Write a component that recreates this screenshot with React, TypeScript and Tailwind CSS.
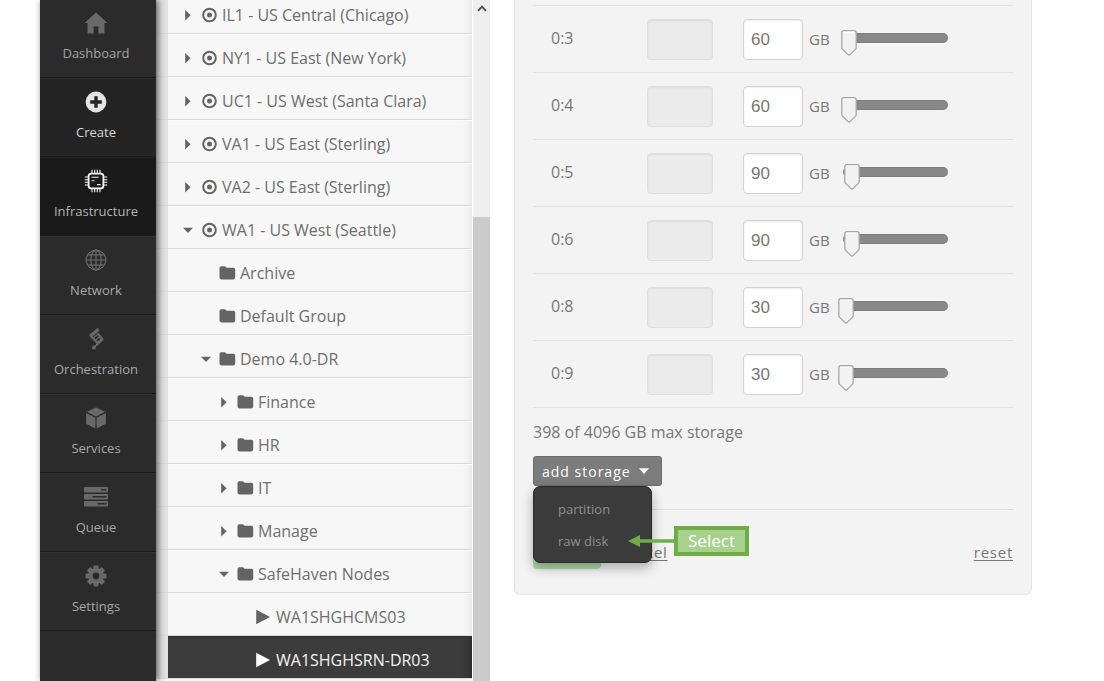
import { useState, type ReactNode } from "react";

type NavItem = { label: string; icon: ReactNode; tone: string; text: string };

const HomeIcon = () => (
  <svg width="24" height="22" viewBox="0 0 24 22" fill="currentColor" aria-hidden="true">
    <path d="M12 0.5 L23.5 11 H20.5 V21.5 H14.4 V14.5 H9.6 V21.5 H3.5 V11 H0.5 Z" />
  </svg>
);

const PlusIcon = () => (
  <svg width="22" height="22" viewBox="0 0 22 22" aria-hidden="true">
    <circle cx="11" cy="11" r="10.4" fill="currentColor" />
    <path d="M11 5.2V16.8M5.2 11H16.8" stroke="#242424" strokeWidth="3.4" />
  </svg>
);

const ChipIcon = () => (
  <svg width="24" height="24" viewBox="0 0 24 24" fill="none" stroke="currentColor" aria-hidden="true">
    <rect x="4.6" y="4.6" width="14.8" height="14.8" rx="2.6" strokeWidth="1.8" />
    <path
      strokeWidth="1.1"
      d="M8 .8V4M10.7 .8V4M13.3 .8V4M16 .8V4M8 20V23.2M10.7 20V23.2M13.3 20V23.2M16 20V23.2M.8 8H4M.8 10.7H4M.8 13.3H4M.8 16H4M20 8H23.2M20 10.7H23.2M20 13.3H23.2M20 16H23.2"
    />
    <path strokeWidth="1.1" d="M7.6 8.3H14.6M7.6 11.8H10.4M13 15.6H16.6" />
  </svg>
);

const GlobeIcon = () => (
  <svg width="22" height="22" viewBox="0 0 22 22" fill="none" stroke="currentColor" strokeWidth="1.2" aria-hidden="true">
    <circle cx="11" cy="11" r="9.8" />
    <ellipse cx="11" cy="11" rx="5.2" ry="9.8" />
    <path d="M11 1.2V20.8M1.2 11H20.8M2.8 5.8H19.2M2.8 16.2H19.2" />
  </svg>
);

const FlowIcon = () => (
  <svg width="16" height="22" viewBox="0 0 16 22" fill="none" stroke="currentColor" strokeLinecap="round" strokeLinejoin="round" aria-hidden="true">
    <path d="M9.6 2L3.2 7.4" strokeWidth="3.4" />
    <path d="M2.8 8L9 14.4" strokeWidth="2.2" />
    <path d="M10 6L14.4 11.2L9 16.8" strokeWidth="2.2" />
    <path d="M5.8 9.4L9.8 6.2M7.6 12L11.8 8.8M9.6 14.2L13.4 11.2" strokeWidth="1.3" />
    <circle cx="6" cy="19.4" r="2" fill="currentColor" stroke="none" />
    <path d="M6 19.4L9 16.8" strokeWidth="1.4" />
  </svg>
);

const CubeIcon = () => (
  <svg width="20" height="22" viewBox="0 0 20 22" fill="currentColor" aria-hidden="true">
    <path d="M10 .4L19.2 4.8L10 9.6L.8 4.8Z" />
    <path d="M.1 6L9.4 10.8V21.6L.1 16.8Z" />
    <path d="M19.9 6L10.6 10.8V21.6L19.9 16.8Z" />
  </svg>
);

const QueueIcon = () => (
  <svg width="24" height="20" viewBox="0 0 24 20" aria-hidden="true">
    <g fill="currentColor">
      <rect width="24" height="5.6" rx=".8" />
      <rect y="7" width="24" height="5.6" rx=".8" />
      <rect y="14" width="24" height="5.6" rx=".8" />
    </g>
    <path d="M17 2.8H22.4M8.4 9.8H22.4M13.6 16.8H22.4" stroke="#2b2b2b" strokeWidth="1.6" />
  </svg>
);

const GearIcon = () => (
  <svg width="22" height="22" viewBox="-11 -11 22 22" aria-hidden="true">
    <g fill="currentColor">
      {[0, 45, 90, 135].map((a) => (
        <rect key={a} x="-2.6" y="-10.5" width="5.2" height="21" rx="1.4" transform={`rotate(${a})`} />
      ))}
      <circle r="7.8" />
    </g>
    <circle r="3.4" fill="#2b2b2b" />
  </svg>
);

const idle = "bg-[#2b2b2b] text-[#696969]";
const nav: NavItem[] = [
  { label: "Dashboard", icon: <HomeIcon />, tone: idle, text: "text-[#a3a3a3]" },
  { label: "Create", icon: <PlusIcon />, tone: "bg-[#242424] text-[#e4e4e4]", text: "text-[#d6d6d6]" },
  { label: "Infrastructure", icon: <ChipIcon />, tone: "bg-[#1a1a1a] text-[#f5f5f5]", text: "text-[#b4b4b4]" },
  { label: "Network", icon: <GlobeIcon />, tone: idle, text: "text-[#a8a8a8]" },
  { label: "Orchestration", icon: <FlowIcon />, tone: idle, text: "text-[#a8a8a8]" },
  { label: "Services", icon: <CubeIcon />, tone: idle, text: "text-[#a8a8a8]" },
  { label: "Queue", icon: <QueueIcon />, tone: idle, text: "text-[#a8a8a8]" },
  { label: "Settings", icon: <GearIcon />, tone: idle, text: "text-[#a8a8a8]" },
];

type Kind = "site" | "folder" | "server";
type Node = { label: string; kind: Kind; level: 0 | 1 | 2 | 3; caret?: "open" | "closed"; active?: boolean };

const tree: Node[] = [
  { label: "IL1 - US Central (Chicago)", kind: "site", level: 0, caret: "closed" },
  { label: "NY1 - US East (New York)", kind: "site", level: 0, caret: "closed" },
  { label: "UC1 - US West (Santa Clara)", kind: "site", level: 0, caret: "closed" },
  { label: "VA1 - US East (Sterling)", kind: "site", level: 0, caret: "closed" },
  { label: "VA2 - US East (Sterling)", kind: "site", level: 0, caret: "closed" },
  { label: "WA1 - US West (Seattle)", kind: "site", level: 0, caret: "open" },
  { label: "Archive", kind: "folder", level: 1 },
  { label: "Default Group", kind: "folder", level: 1 },
  { label: "Demo 4.0-DR", kind: "folder", level: 1, caret: "open" },
  { label: "Finance", kind: "folder", level: 2, caret: "closed" },
  { label: "HR", kind: "folder", level: 2, caret: "closed" },
  { label: "IT", kind: "folder", level: 2, caret: "closed" },
  { label: "Manage", kind: "folder", level: 2, caret: "closed" },
  { label: "SafeHaven Nodes", kind: "folder", level: 2, caret: "open" },
  { label: "WA1SHGHCMS03", kind: "server", level: 3 },
  { label: "WA1SHGHSRN-DR03", kind: "server", level: 3, active: true },
];

const indent = ["pl-[14px]", "pl-[32px]", "pl-[50px]", "pl-[68px]"];

function Caret({ state }: { state?: "open" | "closed" }) {
  return (
    <svg width="12" height="12" viewBox="0 0 12 12" fill="currentColor" className="shrink-0" aria-hidden="true">
      {state === "closed" && <path d="M3.2 1L8.6 6.2L3.2 11.4Z" />}
      {state === "open" && <path d="M1 3.8H11L6 9Z" />}
    </svg>
  );
}

function KindIcon({ kind }: { kind: Kind }) {
  return (
    <svg width="17" height="16" viewBox="0 0 17 16" fill="currentColor" className="shrink-0" aria-hidden="true">
      {kind === "site" && (
        <>
          <circle cx="8.5" cy="8" r="6.3" fill="none" stroke="currentColor" strokeWidth="2" />
          <circle cx="8.5" cy="8" r="2.5" />
        </>
      )}
      {kind === "folder" && (
        <path d="M.5 3Q.5 1.2 2.3 1.2H5.6Q7.2 1.2 7.4 2.8H14.4Q16.2 2.8 16.2 4.6V12.6Q16.2 14.4 14.4 14.4H2.3Q.5 14.4 .5 12.6Z" />
      )}
      {kind === "server" && <path d="M1.2 .8L15 8L1.2 15.2Z" />}
    </svg>
  );
}

function Tree() {
  return (
    <ul className="-mt-[9px] flex-1">
      {tree.map((n) => (
        <li key={n.label} className="h-[43px] border-b border-[#dadada] bg-[#e2e2e2] pl-3">
          <button
            className={`flex h-full w-full items-center border-t pt-1 text-left text-[16px] whitespace-nowrap ${indent[n.level]} ${
              n.active
                ? "border-[#333333] bg-[#3c3c3c] text-[#f4f4f4] shadow-[inset_-10px_0_8px_-8px_rgba(0,0,0,0.35)]"
                : "border-[#fcfcfc] bg-[#f7f7f7] text-[#6e6e6e] shadow-[inset_-10px_0_8px_-8px_rgba(0,0,0,0.08)]"
            }`}
          >
            <span className={`mr-1 flex items-center gap-[7px] ${n.active ? "text-white" : "text-[#646464]"}`}>
              <Caret state={n.caret} />
              <KindIcon kind={n.kind} />
            </span>
            {n.label}
          </button>
        </li>
      ))}
    </ul>
  );
}

function DiskRow({ id, initial }: { id: string; initial: number }) {
  const [size, setSize] = useState(initial);
  return (
    <tr className="h-[67px] border-b border-[#e2e2e2]">
      <td className="w-[114px] pb-[2px] pl-[18px] text-[16px]">{id}</td>
      <td className="w-24">
        <input
          aria-label={`Path for ${id}`}
          disabled
          className="block h-[41px] w-[66px] rounded-[4px] border border-[#dfdfdf] bg-[#ebebeb] shadow-[inset_0_1px_2px_rgba(0,0,0,0.06)]"
        />
      </td>
      <td>
        <div className="flex items-center gap-[6px]">
          <input
            id={`size-${id}`}
            value={size}
            onChange={(e) => setSize(Number(e.target.value) || 0)}
            className="block h-[41px] w-[60px] rounded-[4px] border border-[#d2d2d2] bg-white px-[7px] pt-px font-['Liberation_Sans',sans-serif] text-[17px] shadow-[inset_0_1px_2px_rgba(0,0,0,0.08)]"
          />
          <label htmlFor={`size-${id}`} className="w-7 text-[15px]">GB</label>
          <div className="relative flex h-[26px] w-[105px] items-start pt-[7px]">
            <input
              type="range"
              aria-label={`Size of ${id}`}
              min={0}
              max={1024}
              value={size}
              onChange={(e) => setSize(Number(e.target.value))}
              className="block h-[10px] w-full appearance-none rounded-full border-y border-[#7c7c7c] bg-[#888888] [&::-webkit-slider-thumb]:size-2 [&::-webkit-slider-thumb]:appearance-none"
            />
            <svg
              width="16"
              height="26"
              viewBox="0 0 16 26"
              aria-hidden="true"
              className="pointer-events-none absolute top-1"
              style={{ left: Math.round(size / 10 - 8) }}
            >
              <path d="M3 .7H13Q15.2 .7 15.2 3V17.6Q15.2 18.6 14.4 19.4L9 24.6Q8 25.5 7 24.6L1.6 19.4Q.8 18.6 .8 17.6V3Q.8 .7 3 .7Z" fill="#f2f2f2" stroke="#a6a6a6" strokeWidth="1.3" />
              <path d="M2 2.2H14" fill="none" stroke="#ffffff" strokeWidth=".8" />
            </svg>
          </div>
        </div>
      </td>
    </tr>
  );
}

const disks = [
  { id: "0:3", size: 60 },
  { id: "0:4", size: 60 },
  { id: "0:5", size: 90 },
  { id: "0:6", size: 90 },
  { id: "0:8", size: 30 },
  { id: "0:9", size: 30 },
];

export default function App() {
  return (
    <div className="flex h-screen overflow-hidden bg-white pl-10 font-['Open_Sans','Noto_Sans',sans-serif] text-[#777777]">
      <nav className="z-10 w-[116px] shrink-0 bg-[#2b2b2b] shadow-[2px_0_7px_rgba(0,0,0,0.6)]">
        <ul className="-mt-px">
          {nav.map((n) => (
            <li key={n.label}>
              <a
                href="#"
                className={`flex h-[79px] flex-col items-center border-b border-[#1b1b1b] pt-3 pr-1 shadow-[inset_0_1px_0_rgba(255,255,255,0.03)] ${n.tone}`}
              >
                <span className="flex h-6 items-center">{n.icon}</span>
                <span className={`mt-2 text-[13px] leading-5 ${n.text}`}>{n.label}</span>
              </a>
            </li>
          ))}
        </ul>
      </nav>

      <aside className="flex w-[334px] shrink-0">
        <div className="flex w-[316px] flex-col bg-[#f7f7f7]">
          <Tree />
        </div>
        <div className="flex flex-1 flex-col border-l border-white bg-[#eeeeee]">
          <div className="flex h-4 items-center justify-center">
            <svg width="10" height="7" viewBox="0 0 10 7" fill="none" stroke="#505050" strokeWidth="1.9" aria-hidden="true">
              <path d="M1 5.8L5 1.6L9 5.8" />
            </svg>
          </div>
          <div className="mt-[201px] flex-1 bg-[#cacaca]" />
        </div>
      </aside>

      <main className="mr-[72px] ml-6 flex-1 self-start rounded-b-[6px] border-x border-b border-[#e4e4e4] bg-[#f3f3f3] px-[18px] pt-[5px] pb-[25px]">
        <table className="w-full border-collapse border-t border-[#e2e2e2]">
          <tbody>
            {disks.map((d) => (
              <DiskRow key={d.id} id={d.id} initial={d.size} />
            ))}
          </tbody>
        </table>

        <p className="mt-3 text-[16px] leading-6">398 of 4096 GB max storage</p>

        <div className="relative mt-3 w-fit">
          <button className="flex h-[30px] items-center gap-2 rounded-[3px] border border-[#6d6d6d] bg-[#7c7c7c] pr-3 pl-2 text-[14px] tracking-[1px] text-white">
            add storage
            <svg width="10" height="6" viewBox="0 0 10 6" fill="currentColor" aria-hidden="true">
              <path d="M0 .2H10L5 6Z" />
            </svg>
          </button>
          <div className="absolute top-full left-0 flex h-[77px] w-[119px] flex-col rounded-[7px] border border-[#2a2a2a] bg-[#3b3b3b] pt-[7px] shadow-[0_5px_12px_rgba(0,0,0,0.3)]">
            <button className="h-8 pl-6 text-left text-[13px] text-[#8e8e8e]">partition</button>
            <button className="h-8 pl-6 text-left text-[13px] text-[#8e8e8e]">raw disk</button>
            <div className="absolute top-[39px] left-[94px] flex items-center">
              <svg width="46" height="14" viewBox="0 0 46 14" fill="#70ad47" aria-hidden="true">
                <path d="M0 7L12 1V5.2H46V8.8H12V13Z" />
              </svg>
              <span className="flex h-[30px] w-[75px] items-center justify-center border-4 border-[#70ad47] bg-[#a9d18e] text-[17px] text-white">
                Select
              </span>
            </div>
          </div>
        </div>

        <div className="mt-[23px] flex items-center border-t border-[#dcdcdc] pt-[25px]">
          <button aria-label="save" className="h-[34px] w-[68px] rounded-[4px] bg-[#addbab]" />
          <a href="#" className="mb-px ml-[18px] text-[15px] leading-5 tracking-[0.05em] underline underline-offset-2">cancel</a>
          <a href="#" className="mb-px ml-auto text-[15px] leading-5 tracking-[0.05em] underline underline-offset-2">reset</a>
        </div>
      </main>
    </div>
  );
}
